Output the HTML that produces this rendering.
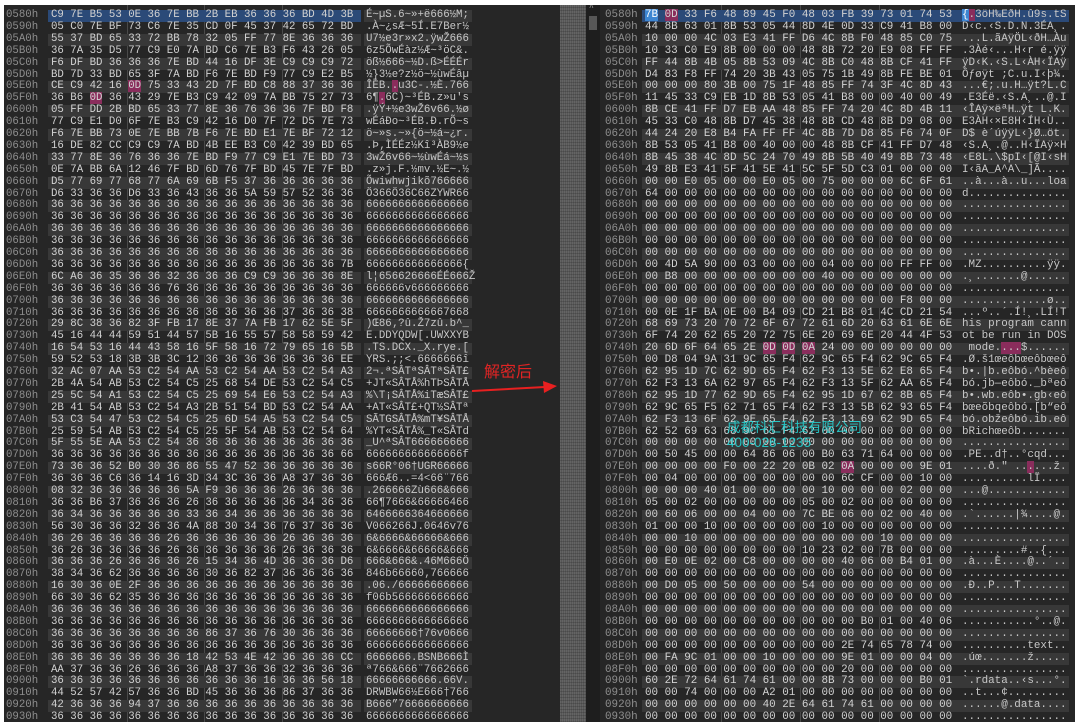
<!DOCTYPE html>
<html><head><meta charset="utf-8"><style>
*{margin:0;padding:0}
body{width:1080px;height:727px;background:#fff;position:relative;overflow:hidden;font-family:"Liberation Mono",monospace;}
.p{position:absolute;top:0;height:722px;background:#262626;overflow:hidden}
#L{left:4px;width:556px;font-size:10.72px}
#R{left:600px;width:475px;font-size:10.9px}
.r{position:absolute;left:0;height:11.9px;line-height:11.9px;white-space:pre;width:100%}
.r i{position:absolute;font-style:normal;color:#8e8e8e;left:2px}
.r s{position:absolute;text-decoration:none;color:#d2d2d2;padding-left:3px}
.r u{position:absolute;text-decoration:none;color:#c8c8c8;padding-left:2px}
#L s{left:44px;width:310px}#L u{left:360px;width:106px}
#R s{left:42px;width:315px}#R u{left:360px;width:107px}
#R .r i{left:5px}
.l s,.l u{background:#383838}
.sel s{background:#2b4a78}
b{font-weight:normal}
.m{background:#8a2d5c}.bb{background:#3d86d2;color:#fff}
.vl{position:absolute;top:0;height:722px;width:1px;background:#4a4a4a}
#sc{position:absolute;left:560px;top:0;width:26px;height:722px;background:#575757;
background-image:repeating-linear-gradient(0deg,rgba(0,0,0,.15) 0 1px,transparent 1px 3px),repeating-linear-gradient(90deg,rgba(255,255,255,.08) 0 1px,transparent 1px 2px)}
#gap{position:absolute;left:586px;top:0;width:14px;height:722px;background:#1e1e1e}
</style></head><body>
<div id="sc"></div><div id="gap"><div style="position:absolute;left:3px;top:16px;width:8px;height:14px;background:#575757"></div><div style="position:absolute;left:3px;top:4px;color:#aaa;font-size:8px">^</div></div>

<div class="p" id="L">
<div class="vl" style="left:123px"></div><div class="vl" style="left:200px"></div><div class="vl" style="left:278px"></div>
<div class="r" style="top:-2px"><s style="color:#777">0  1  2  3  4  5  6  7  8  9  A  B  C  D  E  F</s></div>
<div class="r sel" style="top:10px"><i>0580h</i><s>C9 7E B5 53 0E 36 7E BB 2B EB 36 36 36 BD 4D 3B</s><u style="background:#383838">É~µS.6~»+ë666½M;</u></div>
<div class="r" style="top:21.9px"><i>0590h</i><s>05 C0 7E BF 73 C6 7E 35 CD 0F 45 37 42 65 72 BD</s><u>.À~¿sÆ~5Í.E7Ber½</u></div>
<div class="r l" style="top:33.8px"><i>05A0h</i><s>55 37 BD 65 33 72 BB 78 32 05 FF 77 8E 36 36 36</s><u>U7½e3r»x2.ÿwŽ666</u></div>
<div class="r" style="top:45.7px"><i>05B0h</i><s>36 7A 35 D5 77 C9 E0 7A BD C6 7E B3 F6 43 26 05</s><u>6z5ÕwÉàz½Æ~³öC&amp;.</u></div>
<div class="r l" style="top:57.6px"><i>05C0h</i><s>F6 DF BD 36 36 36 7E BD 44 16 DF 3E C9 C9 C9 72</s><u>öß½666~½D.ß&gt;ÉÉÉr</u></div>
<div class="r" style="top:69.5px"><i>05D0h</i><s>BD 7D 33 BD 65 3F 7A BD F6 7E BD F9 77 C9 E2 B5</s><u>½}3½e?z½ö~½ùwÉâµ</u></div>
<div class="r l" style="top:81.4px"><i>05E0h</i><s>CE C9 42 16 <b class="m">0D</b> 75 33 43 2D 7F BD C8 88 37 36 36</s><u>ÎÉB.<b class="m">.</b>u3C-.½È.766</u></div>
<div class="r" style="top:93.3px"><i>05F0h</i><s>36 B6 <b class="m">0D</b> 36 43 29 7E B3 C9 42 09 7A BB 75 27 73</s><u>6¶<b class="m">.</b>6C)~³ÉB.z»u's</u></div>
<div class="r l" style="top:105.2px"><i>0600h</i><s>05 FF DD 2B BD 65 33 77 8E 36 76 36 36 7F BD F8</s><u>.ÿÝ+½e3wŽ6v66.½ø</u></div>
<div class="r" style="top:117.1px"><i>0610h</i><s>77 C9 E1 D0 6F 7E B3 C9 42 16 D0 7F 72 D5 7E 73</s><u>wÉáÐo~³ÉB.Ð.rÕ~s</u></div>
<div class="r l" style="top:129px"><i>0620h</i><s>F6 7E BB 73 0E 7E BB 7B F6 7E BD E1 7E BF 72 12</s><u>ö~»s.~»{ö~½á~¿r.</u></div>
<div class="r" style="top:140.9px"><i>0630h</i><s>16 DE 82 CC C9 C9 7A BD 4B EE B3 C0 42 39 BD 65</s><u>.Þ‚ÌÉÉz½Kî³ÀB9½e</u></div>
<div class="r l" style="top:152.8px"><i>0640h</i><s>33 77 8E 36 76 36 36 7E BD F9 77 C9 E1 7E BD 73</s><u>3wŽ6v66~½ùwÉá~½s</u></div>
<div class="r" style="top:164.7px"><i>0650h</i><s>0E 7A BB 6A 12 46 7F BD 6D 76 7F BD 45 7E 7F BD</s><u>.z»j.F.½mv.½E~.½</u></div>
<div class="r l" style="top:176.6px"><i>0660h</i><s>D5 77 69 77 68 77 6A 69 6B F5 37 36 36 36 36 36</s><u>Õwiwhwjikõ766666</u></div>
<div class="r" style="top:188.5px"><i>0670h</i><s>D6 33 36 36 D6 33 36 43 36 36 5A 59 57 52 36 36</s><u>Ö366Ö36C66ZYWR66</u></div>
<div class="r l" style="top:200.4px"><i>0680h</i><s>36 36 36 36 36 36 36 36 36 36 36 36 36 36 36 36</s><u>6666666666666666</u></div>
<div class="r" style="top:212.3px"><i>0690h</i><s>36 36 36 36 36 36 36 36 36 36 36 36 36 36 36 36</s><u>6666666666666666</u></div>
<div class="r l" style="top:224.2px"><i>06A0h</i><s>36 36 36 36 36 36 36 36 36 36 36 36 36 36 36 36</s><u>6666666666666666</u></div>
<div class="r" style="top:236.1px"><i>06B0h</i><s>36 36 36 36 36 36 36 36 36 36 36 36 36 36 36 36</s><u>6666666666666666</u></div>
<div class="r l" style="top:248px"><i>06C0h</i><s>36 36 36 36 36 36 36 36 36 36 36 36 36 36 36 36</s><u>6666666666666666</u></div>
<div class="r" style="top:259.9px"><i>06D0h</i><s>36 36 36 36 36 36 36 36 36 36 36 36 36 36 36 7B</s><u>666666666666666{</u></div>
<div class="r l" style="top:271.8px"><i>06E0h</i><s>6C A6 36 35 36 36 32 36 36 36 C9 C9 36 36 36 8E</s><u>l¦656626666ÉÉ666Ž</u></div>
<div class="r" style="top:283.7px"><i>06F0h</i><s>36 36 36 36 36 36 76 36 36 36 36 36 36 36 36 36</s><u>666666v666666666</u></div>
<div class="r l" style="top:295.6px"><i>0700h</i><s>36 36 36 36 36 36 36 36 36 36 36 36 36 36 36 36</s><u>6666666666666666</u></div>
<div class="r" style="top:307.5px"><i>0710h</i><s>36 36 36 36 36 36 36 36 36 36 36 36 37 36 36 38</s><u>6666666666667668</u></div>
<div class="r l" style="top:319.4px"><i>0720h</i><s>29 8C 38 36 82 3F FB 17 8E 37 7A FB 17 62 5E 5F</s><u>)Œ86‚?û.Ž7zû.b^_</u></div>
<div class="r" style="top:331.3px"><i>0730h</i><s>45 16 44 44 59 51 44 57 5B 16 55 57 58 58 59 42</s><u>E.DDYQDW[.UWXXYB</u></div>
<div class="r l" style="top:343.2px"><i>0740h</i><s>16 54 53 16 44 43 58 16 5F 58 16 72 79 65 16 5B</s><u>.TS.DCX._X.rye.[</u></div>
<div class="r" style="top:355.1px"><i>0750h</i><s>59 52 53 18 3B 3B 3C 12 36 36 36 36 36 36 36 EE</s><u>YRS.;;&lt;.6666666î</u></div>
<div class="r l" style="top:367px"><i>0760h</i><s>32 AC 07 AA 53 C2 54 AA 53 C2 54 AA 53 C2 54 A3</s><u>2¬.ªSÂTªSÂTªSÂT£</u></div>
<div class="r" style="top:378.9px"><i>0770h</i><s>2B 4A 54 AB 53 C2 54 C5 25 68 54 DE 53 C2 54 C5</s><u>+JT«SÂTÅ%hTÞSÂTÅ</u></div>
<div class="r l" style="top:390.8px"><i>0780h</i><s>25 5C 54 A1 53 C2 54 C5 25 69 54 E6 53 C2 54 A3</s><u>%\T¡SÂTÅ%iTæSÂT£</u></div>
<div class="r" style="top:402.7px"><i>0790h</i><s>2B 41 54 AB 53 C2 54 A3 2B 51 54 BD 53 C2 54 AA</s><u>+AT«SÂT£+QT½SÂTª</u></div>
<div class="r l" style="top:414.6px"><i>07A0h</i><s>53 C3 54 47 53 C2 54 C5 25 6D 54 A5 53 C2 54 C5</s><u>SÃTGSÂTÅ%mT¥SÂTÅ</u></div>
<div class="r" style="top:426.5px"><i>07B0h</i><s>25 59 54 AB 53 C2 54 C5 25 5F 54 AB 53 C2 54 64</s><u>%YT«SÂTÅ%_T«SÂTd</u></div>
<div class="r l" style="top:438.4px"><i>07C0h</i><s>5F 55 5E AA 53 C2 54 36 36 36 36 36 36 36 36 36</s><u>_U^ªSÂT666666666</u></div>
<div class="r" style="top:450.3px"><i>07D0h</i><s>36 36 36 36 36 36 36 36 36 36 36 36 36 36 36 66</s><u>666666666666666f</u></div>
<div class="r l" style="top:462.2px"><i>07E0h</i><s>73 36 36 52 B0 30 36 86 55 47 52 36 36 36 36 36</s><u>s66R°06†UGR66666</u></div>
<div class="r" style="top:474.1px"><i>07F0h</i><s>36 36 36 C6 36 14 16 3D 34 3C 36 36 A8 37 36 36</s><u>666Æ6..=4&lt;66¨766</u></div>
<div class="r l" style="top:486px"><i>0800h</i><s>08 32 36 36 36 36 36 5A F9 36 36 36 26 36 36 36</s><u>.266666Zù666&amp;666</u></div>
<div class="r" style="top:497.9px"><i>0810h</i><s>36 36 B6 37 36 36 36 26 36 36 36 36 36 34 36 36</s><u>66¶7666&amp;66666466</u></div>
<div class="r l" style="top:509.8px"><i>0820h</i><s>36 34 36 36 36 36 36 33 36 34 36 36 36 36 36 36</s><u>6466666364666666</u></div>
<div class="r" style="top:521.7px"><i>0830h</i><s>56 30 36 36 32 36 36 4A 88 30 34 36 76 37 36 36</s><u>V066266J.0646v76</u></div>
<div class="r l" style="top:533.6px"><i>0840h</i><s>36 26 36 36 36 36 26 36 36 36 36 36 26 36 36 36</s><u>6&amp;6666&amp;66666&amp;666</u></div>
<div class="r" style="top:545.5px"><i>0850h</i><s>36 26 36 36 36 36 26 36 36 36 36 36 26 36 36 36</s><u>6&amp;6666&amp;66666&amp;666</u></div>
<div class="r l" style="top:557.4px"><i>0860h</i><s>36 36 36 26 36 36 36 26 15 34 36 4D 36 36 36 D6</s><u>666&amp;666&amp;.46M666Ö</u></div>
<div class="r" style="top:569.3px"><i>0870h</i><s>38 34 36 62 36 36 36 36 30 36 82 37 36 36 36 36</s><u>846b66660‚766666</u></div>
<div class="r l" style="top:581.2px"><i>0880h</i><s>16 30 36 0E 2F 36 36 36 36 36 36 36 36 36 36 36</s><u>.06./66666666666</u></div>
<div class="r" style="top:593.1px"><i>0890h</i><s>66 30 36 62 35 36 36 36 36 36 36 36 36 36 36 36</s><u>f06b566666666666</u></div>
<div class="r l" style="top:605px"><i>08A0h</i><s>36 36 36 36 36 36 36 36 36 36 36 36 36 36 36 36</s><u>6666666666666666</u></div>
<div class="r" style="top:616.9px"><i>08B0h</i><s>36 36 36 36 36 36 36 36 36 36 36 36 36 36 36 36</s><u>6666666666666666</u></div>
<div class="r l" style="top:628.8px"><i>08C0h</i><s>36 36 36 36 36 36 36 36 86 37 36 76 30 36 36 36</s><u>66666666†76v0666</u></div>
<div class="r" style="top:640.7px"><i>08D0h</i><s>36 36 36 36 36 36 36 36 36 36 36 36 36 36 36 36</s><u>6666666666666666</u></div>
<div class="r l" style="top:652.6px"><i>08E0h</i><s>36 36 36 36 36 36 36 18 42 53 4E 42 36 36 36 CC</s><u>6666666.BSNB666Ì</u></div>
<div class="r" style="top:664.5px"><i>08F0h</i><s>AA 37 36 36 26 36 36 36 A8 37 36 36 32 36 36 36</s><u>ª766&amp;666¨7662666</u></div>
<div class="r l" style="top:676.4px"><i>0900h</i><s>36 36 36 36 36 36 36 36 36 36 36 16 36 36 56 18</s><u>66666666666.66V.</u></div>
<div class="r" style="top:688.3px"><i>0910h</i><s>44 52 57 42 57 36 36 BD 45 36 36 36 86 37 36 36</s><u>DRWBW66½E666†766</u></div>
<div class="r l" style="top:700.2px"><i>0920h</i><s>42 36 36 36 94 37 36 36 36 36 36 36 36 36 36 36</s><u>B666”76666666666</u></div>
<div class="r" style="top:712.1px"><i>0930h</i><s>36 36 36 36 36 36 36 36 36 36 36 36 36 36 36 36</s><u>6666666666666666</u></div>
</div>

<div class="p" id="R">
<div class="vl" style="left:121px"></div><div class="vl" style="left:200px"></div><div class="vl" style="left:279px"></div>
<div class="r" style="top:-2px"><s style="color:#777">0  1  2  3  4  5  6  7  8  9  A  B  C  D  E  F</s></div>
<div class="r sel" style="top:10px"><i>0580h</i><s><b class="bb">7B</b> <b class="m">0D</b> 33 F6 48 89 45 F0 48 03 FB 39 73 01 74 53</s><u style="background:#2b4a78"><b class="bb">{</b><b class="m">.</b>3öH‰EðH.û9s.tS</u></div>
<div class="r" style="top:21.9px"><i>0590h</i><s>44 8B 63 01 8B 53 05 44 8D 4E 0D 33 C9 41 B8 00</s><u>D‹c.‹S.D.N.3ÉA¸.</u></div>
<div class="r l" style="top:33.8px"><i>05A0h</i><s>10 00 00 4C 03 E3 41 FF D6 4C 8B F0 48 85 C0 75</s><u>...L.ãAÿÖL‹ðH…Àu</u></div>
<div class="r" style="top:45.7px"><i>05B0h</i><s>10 33 C0 E9 8B 00 00 00 48 8B 72 20 E9 08 FF FF</s><u>.3Àé‹...H‹r é.ÿÿ</u></div>
<div class="r l" style="top:57.6px"><i>05C0h</i><s>FF 44 8B 4B 05 8B 53 09 4C 8B C0 48 8B CF 41 FF</s><u>ÿD‹K.‹S.L‹ÀH‹ÏAÿ</u></div>
<div class="r" style="top:69.5px"><i>05D0h</i><s>D4 83 F8 FF 74 20 3B 43 05 75 1B 49 8B FE BE 01</s><u>Ôƒøÿt ;C.u.I‹þ¾.</u></div>
<div class="r l" style="top:81.4px"><i>05E0h</i><s>00 00 00 80 3B 00 75 1F 48 85 FF 74 3F 4C 8D 43</s><u>...€;.u.H…ÿt?L.C</u></div>
<div class="r" style="top:93.3px"><i>05F0h</i><s>11 45 33 C9 EB 1D 8B 53 05 41 B8 00 00 40 00 49</s><u>.E3Éë.‹S.A¸..@.I</u></div>
<div class="r l" style="top:105.2px"><i>0600h</i><s>8B CE 41 FF D7 EB AA 48 85 FF 74 20 4C 8D 4B 11</s><u>‹ÎAÿ×ëªH…ÿt L.K.</u></div>
<div class="r" style="top:117.1px"><i>0610h</i><s>45 33 C0 48 8B D7 45 38 48 8B CD 48 8B D9 08 00</s><u>E3ÀH‹×E8H‹ÍH‹Ù..</u></div>
<div class="r l" style="top:129px"><i>0620h</i><s>44 24 20 E8 B4 FA FF FF 4C 8B 7D D8 85 F6 74 0F</s><u>D$ è´úÿÿL‹}Ø…öt.</u></div>
<div class="r" style="top:140.9px"><i>0630h</i><s>8B 53 05 41 B8 00 40 00 00 48 8B CF 41 FF D7 48</s><u>‹S.A¸.@..H‹ÏAÿ×H</u></div>
<div class="r l" style="top:152.8px"><i>0640h</i><s>8B 45 38 4C 8D 5C 24 70 49 8B 5B 40 49 8B 73 48</s><u>‹E8L.\$pI‹[@I‹sH</u></div>
<div class="r" style="top:164.7px"><i>0650h</i><s>49 8B E3 41 5F 41 5E 41 5C 5F 5D C3 01 00 00 00</s><u>I‹ãA_A^A\_]Ã....</u></div>
<div class="r l" style="top:176.6px"><i>0660h</i><s>00 00 E0 05 00 00 E0 05 00 75 00 00 00 6C 6F 61</s><u>..à...à..u...loa</u></div>
<div class="r" style="top:188.5px"><i>0670h</i><s>64 00 00 00 00 00 00 00 00 00 00 00 00 00 00 00</s><u>d...............</u></div>
<div class="r l" style="top:200.4px"><i>0680h</i><s>00 00 00 00 00 00 00 00 00 00 00 00 00 00 00 00</s><u>................</u></div>
<div class="r" style="top:212.3px"><i>0690h</i><s>00 00 00 00 00 00 00 00 00 00 00 00 00 00 00 00</s><u>................</u></div>
<div class="r l" style="top:224.2px"><i>06A0h</i><s>00 00 00 00 00 00 00 00 00 00 00 00 00 00 00 00</s><u>................</u></div>
<div class="r" style="top:236.1px"><i>06B0h</i><s>00 00 00 00 00 00 00 00 00 00 00 00 00 00 00 00</s><u>................</u></div>
<div class="r l" style="top:248px"><i>06C0h</i><s>00 00 00 00 00 00 00 00 00 00 00 00 00 00 00 00</s><u>................</u></div>
<div class="r" style="top:259.9px"><i>06D0h</i><s>00 4D 5A 90 00 03 00 00 00 04 00 00 00 FF FF 00</s><u>.MZ..........ÿÿ.</u></div>
<div class="r l" style="top:271.8px"><i>06E0h</i><s>00 B8 00 00 00 00 00 00 00 40 00 00 00 00 00 00</s><u>.¸.......@......</u></div>
<div class="r" style="top:283.7px"><i>06F0h</i><s>00 00 00 00 00 00 00 00 00 00 00 00 00 00 00 00</s><u>................</u></div>
<div class="r l" style="top:295.6px"><i>0700h</i><s>00 00 00 00 00 00 00 00 00 00 00 00 00 F8 00 00</s><u>.............ø..</u></div>
<div class="r" style="top:307.5px"><i>0710h</i><s>00 0E 1F BA 0E 00 B4 09 CD 21 B8 01 4C CD 21 54</s><u>...º..´.Í!¸.LÍ!T</u></div>
<div class="r l" style="top:319.4px"><i>0720h</i><s>68 69 73 20 70 72 6F 67 72 61 6D 20 63 61 6E 6E</s><u>his program cann</u></div>
<div class="r" style="top:331.3px"><i>0730h</i><s>6F 74 20 62 65 20 72 75 6E 20 69 6E 20 44 4F 53</s><u>ot be run in DOS</u></div>
<div class="r l" style="top:343.2px"><i>0740h</i><s>20 6D 6F 64 65 2E <b class="m">0D</b> <b class="m">0D</b> <b class="m">0A</b> 24 00 00 00 00 00 00</s><u> mode.<b class="m">...</b>$......</u></div>
<div class="r" style="top:355.1px"><i>0750h</i><s>00 D8 04 9A 31 9C 65 F4 62 9C 65 F4 62 9C 65 F4</s><u>.Ø.š1œeôbœeôbœeô</u></div>
<div class="r l" style="top:367px"><i>0760h</i><s>62 95 1D 7C 62 9D 65 F4 62 F3 13 5E 62 E8 65 F4</s><u>b•.|b.eôbó.^bèeô</u></div>
<div class="r" style="top:378.9px"><i>0770h</i><s>62 F3 13 6A 62 97 65 F4 62 F3 13 5F 62 AA 65 F4</s><u>bó.jb—eôbó._bªeô</u></div>
<div class="r l" style="top:390.8px"><i>0780h</i><s>62 95 1D 77 62 9D 65 F4 62 95 1D 67 62 8B 65 F4</s><u>b•.wb.eôb•.gb‹eô</u></div>
<div class="r" style="top:402.7px"><i>0790h</i><s>62 9C 65 F5 62 71 65 F4 62 F3 13 5B 62 93 65 F4</s><u>bœeõbqeôbó.[b“eô</u></div>
<div class="r l" style="top:414.6px"><i>07A0h</i><s>62 F3 13 6F 62 9E 65 F4 62 F3 13 69 62 9D 65 F4</s><u>bó.obžeôbó.ib.eô</u></div>
<div class="r" style="top:426.5px"><i>07B0h</i><s>62 52 69 63 68 9C 65 F4 62 00 00 00 00 00 00 00</s><u>bRichœeôb.......</u></div>
<div class="r l" style="top:438.4px"><i>07C0h</i><s>00 00 00 00 00 00 00 00 00 00 00 00 00 00 00 00</s><u>................</u></div>
<div class="r" style="top:450.3px"><i>07D0h</i><s>00 50 45 00 00 64 86 06 00 B0 63 71 64 00 00 00</s><u>.PE..d†..°cqd...</u></div>
<div class="r l" style="top:462.2px"><i>07E0h</i><s>00 00 00 00 F0 00 22 20 0B 02 <b class="m">0A</b> 00 00 00 9E 01</s><u>....ð." ..<b class="m">.</b>...ž.</u></div>
<div class="r" style="top:474.1px"><i>07F0h</i><s>00 04 00 00 00 00 00 00 00 00 6C CF 00 00 10 00</s><u>..........lÏ....</u></div>
<div class="r l" style="top:486px"><i>0800h</i><s>00 00 00 40 01 00 00 00 00 10 00 00 00 02 00 00</s><u>...@............</u></div>
<div class="r" style="top:497.9px"><i>0810h</i><s>05 00 02 00 00 00 00 00 05 00 02 00 00 00 00 00</s><u>................</u></div>
<div class="r l" style="top:509.8px"><i>0820h</i><s>00 60 06 00 00 04 00 00 7C BE 06 00 02 00 40 00</s><u>.`......|¾....@.</u></div>
<div class="r" style="top:521.7px"><i>0830h</i><s>01 00 00 10 00 00 00 00 00 10 00 00 00 00 00 00</s><u>................</u></div>
<div class="r l" style="top:533.6px"><i>0840h</i><s>00 00 10 00 00 00 00 00 00 00 00 00 10 00 00 00</s><u>................</u></div>
<div class="r" style="top:545.5px"><i>0850h</i><s>00 00 00 00 00 00 00 00 10 23 02 00 7B 00 00 00</s><u>.........#..{...</u></div>
<div class="r l" style="top:557.4px"><i>0860h</i><s>00 E0 0E 02 00 C8 00 00 00 00 40 06 00 B4 01 00</s><u>.à...È....@..´..</u></div>
<div class="r" style="top:569.3px"><i>0870h</i><s>00 00 00 00 00 00 00 00 00 00 00 00 00 00 00 00</s><u>................</u></div>
<div class="r l" style="top:581.2px"><i>0880h</i><s>00 D0 05 00 50 00 00 00 54 00 00 00 00 00 00 00</s><u>.Ð..P...T.......</u></div>
<div class="r" style="top:593.1px"><i>0890h</i><s>00 00 00 00 00 00 00 00 00 00 00 00 00 00 00 00</s><u>................</u></div>
<div class="r l" style="top:605px"><i>08A0h</i><s>00 00 00 00 00 00 00 00 00 00 00 00 00 00 00 00</s><u>................</u></div>
<div class="r" style="top:616.9px"><i>08B0h</i><s>00 00 00 00 00 00 00 00 00 00 00 B0 01 00 40 06</s><u>...........°..@.</u></div>
<div class="r l" style="top:628.8px"><i>08C0h</i><s>00 00 00 00 00 00 00 00 00 00 00 00 00 00 00 00</s><u>................</u></div>
<div class="r" style="top:640.7px"><i>08D0h</i><s>00 00 00 00 00 00 00 00 00 00 2E 74 65 78 74 00</s><u>..........text..</u></div>
<div class="r l" style="top:652.6px"><i>08E0h</i><s>00 FA 9C 01 00 00 10 00 00 00 9E 01 00 00 04 00</s><u>.úœ.......ž.....</u></div>
<div class="r" style="top:664.5px"><i>08F0h</i><s>00 00 00 00 00 00 00 00 00 00 20 00 00 00 00 00</s><u>................</u></div>
<div class="r l" style="top:676.4px"><i>0900h</i><s>60 2E 72 64 61 74 61 00 00 8B 73 00 00 00 B0 01</s><u>`.rdata..‹s...°.</u></div>
<div class="r" style="top:688.3px"><i>0910h</i><s>00 00 74 00 00 00 A2 01 00 00 00 00 00 00 00 00</s><u>..t...¢.........</u></div>
<div class="r l" style="top:700.2px"><i>0920h</i><s>00 00 00 00 00 00 40 2E 64 61 74 61 00 00 00 00</s><u>......@.data....</u></div>
<div class="r" style="top:712.1px"><i>0930h</i><s>00 00 00 00 00 00 00 00 00 00 00 00 00 00 00 00</s><u>................</u></div>
</div>

<div style="position:absolute;left:0;top:0;width:1080px;height:5px;background:#fff"></div>
<div style="position:absolute;left:0;top:722px;width:1080px;height:5px;background:#fff"></div>

<div style="position:absolute;left:484px;top:358px;color:#e02424;font-family:'Liberation Sans','Noto Sans CJK SC',sans-serif;font-size:16px">解密后</div>
<svg style="position:absolute;left:0;top:0" width="1080" height="727"><line x1="472" y1="391" x2="545" y2="387" stroke="#e82020" stroke-width="2"/><polygon points="543,381 557,386 544,393" fill="#e82020"/></svg>
<div style="position:absolute;left:727px;top:420px;color:#25d4d4;font-family:'Liberation Sans','Noto Sans CJK SC',sans-serif;font-size:13.5px;line-height:15px;opacity:.9">成都科汇科技有限公司<br>400-028-1235</div>
</body></html>
